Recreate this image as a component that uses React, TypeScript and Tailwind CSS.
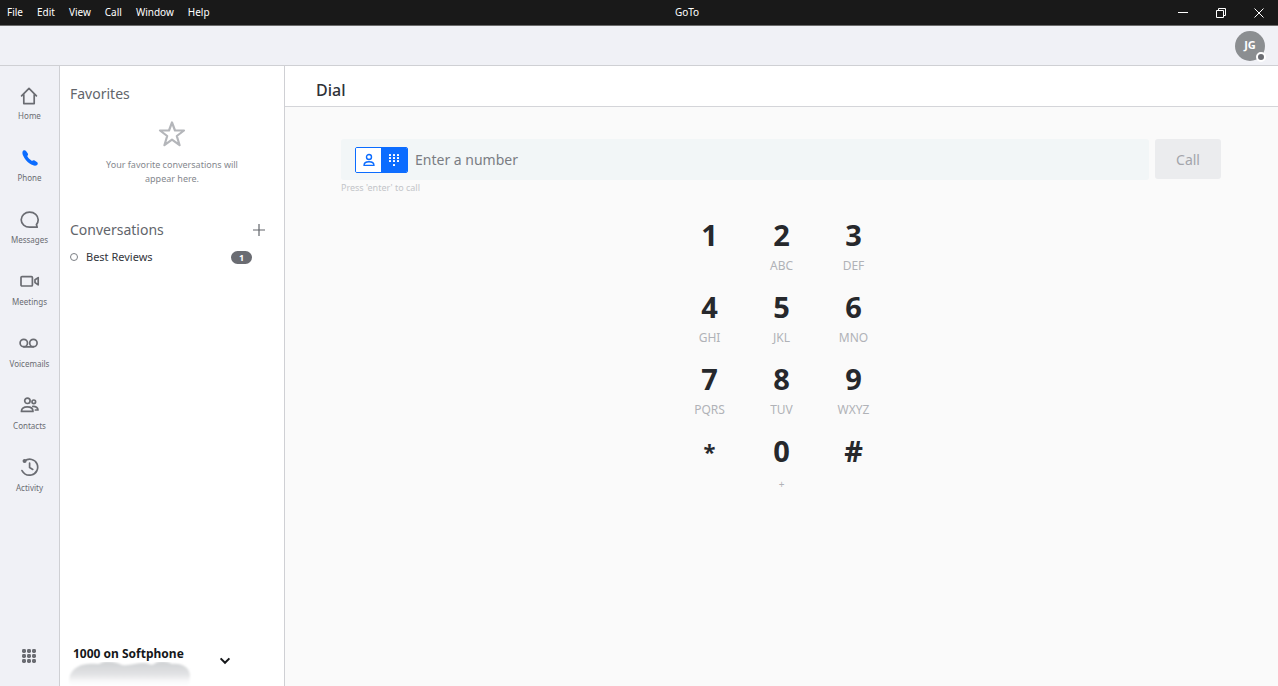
import type { ReactNode } from "react";

const menus = ["File", "Edit", "View", "Call", "Window", "Help"];

const keys = [
    { digit: "1", letters: "" },
    { digit: "2", letters: "ABC" },
    { digit: "3", letters: "DEF" },
    { digit: "4", letters: "GHI" },
    { digit: "5", letters: "JKL" },
    { digit: "6", letters: "MNO" },
    { digit: "7", letters: "PQRS" },
    { digit: "8", letters: "TUV" },
    { digit: "9", letters: "WXYZ" },
    { digit: "*", letters: "" },
    { digit: "0", letters: "+" },
    { digit: "#", letters: "" },
];

function Icon({ children }: { children: ReactNode }) {
    return (
        <svg width="20" height="20" viewBox="0 0 20 20" fill="none" stroke="currentColor" strokeWidth="1.7" strokeLinecap="round" strokeLinejoin="round" aria-hidden="true">
            {children}
        </svg>
    );
}

const navItems = [
    {
        label: "Home",
        icon: <path d="M2.6 9.8 10 2.4 17.4 9.8M4.8 8.8V17.6H15.2V8.8" />,
    },
    {
        label: "Phone",
        active: true,
        icon: (
            <path
                d="M2.6 3.4C3.2 2.2 5 1.8 6 3L7.8 5.6C8.3 6.5 8 7.3 7.2 8.1C8.2 10 9.8 11.8 12 12.9C12.8 12.1 13.7 11.9 14.6 12.4L17.2 14.2C18.3 15.1 17.7 16.6 16.8 17.2C15.2 18.2 12.4 17.4 10 15.8C7.2 14 4.4 10.8 3.2 7.8C2.5 6.2 2.2 4.6 2.6 3.4Z"
                fill="currentColor"
                stroke="none"
            />
        ),
    },
    {
        label: "Messages",
        icon: <path d="M17.2 17.2H9.6C5 17.2 1.2 14.2 1.2 9.8C1.2 5.4 5 2.2 9.6 2.2C14.4 2.2 18.2 5.2 18.2 9.8C18.2 11.8 17.6 13.2 16.4 14.6Z" />,
    },
    {
        label: "Meetings",
        icon: (
            <>
                <rect x="1" y="4.6" width="11.4" height="9.4" rx="1" />
                <path d="M18.2 5.6V12.8L15 10.6V7.8Z" />
            </>
        ),
    },
    {
        label: "Voicemails",
        icon: (
            <>
                <circle cx="4.8" cy="9" r="3.7" />
                <circle cx="14.4" cy="9" r="3.7" />
                <path d="M4.8 12.8H14.4" />
            </>
        ),
    },
    {
        label: "Contacts",
        icon: (
            <>
                <circle cx="7.4" cy="4.8" r="2.7" />
                <circle cx="13.8" cy="5.8" r="1.8" />
                <path d="M1.4 15.4C1.4 12.2 4 10.8 7.2 10.8C10.4 10.8 13 12.2 13 15.4ZM12.8 10.4C15.8 10.2 18 11.6 18 14H15.4" />
            </>
        ),
    },
    {
        label: "Activity",
        icon: (
            <>
                <path d="M4.6 2.9C9 -.2 15 1.2 17 5.8C19 10.6 16.4 15.8 11.4 17C7.4 17.8 3.8 15.8 2 12.6" />
                <circle cx="4.6" cy="3" r="1.2" fill="currentColor" />
                <path d="M9.6 5.2V9.6L12.8 11.4" />
            </>
        ),
    },
];

function TitleBar() {
    return (
        <header className="grid h-[26px] shrink-0 grid-cols-[1fr_auto_1fr] items-center border-b border-[#6b6b6b] bg-[#191919] text-[10px] text-white">
            <nav className="flex gap-[14px] pl-[7px]">
                {menus.map((menu) => (
                    <button key={menu} type="button">{menu}</button>
                ))}
            </nav>
            <span className="pl-[96px]">GoTo</span>
            <div className="flex justify-end">
                <button type="button" aria-label="Minimize" className="flex w-[38px] justify-center">
                    <svg width="10" height="10" viewBox="0 0 10 10" stroke="currentColor"><path d="M0 4.5H10" /></svg>
                </button>
                <button type="button" aria-label="Restore" className="flex w-[38px] justify-center">
                    <svg width="10" height="10" viewBox="0 0 10 10" fill="none" stroke="currentColor"><path d="M.5 2.5H7.5V9.5H.5ZM2.5 2.5V.5H9.5V7.5H7.5" /></svg>
                </button>
                <button type="button" aria-label="Close" className="flex w-[38px] justify-center">
                    <svg width="10" height="10" viewBox="0 0 10 10" stroke="currentColor"><path d="M.5 .5 9.5 9.5M9.5 .5 .5 9.5" /></svg>
                </button>
            </div>
        </header>
    );
}

function NavRail() {
    return (
        <nav className="flex w-[60px] shrink-0 flex-col items-center border-r border-[#cfd0d4] bg-[#f0f1f6] pt-5 pb-5 text-[#6a6c72]">
            {navItems.map((item) => (
                <a key={item.label} href="#" className="flex h-[62px] flex-col items-center gap-1">
                    <span className={item.active ? "text-[#0b6cff]" : ""}>
                        <Icon>{item.icon}</Icon>
                    </span>
                    <span className="text-[8px] leading-[12px]">{item.label}</span>
                </a>
            ))}
            <button type="button" aria-label="Apps" className="mt-auto">
                <svg width="20" height="20" viewBox="0 0 20 20" fill="currentColor">
                    {[3, 8, 13].map((y) =>
                        [2, 7, 12].map((x) => <rect key={`${x}-${y}`} x={x} y={y} width="4" height="4" rx="1.4" />)
                    )}
                </svg>
            </button>
        </nav>
    );
}

function Sidebar() {
    return (
        <aside className="flex w-[225px] shrink-0 flex-col border-r border-[#cfd0d4] bg-white">
            <h2 className="pt-[18px] pl-[10px] text-[14px] leading-5 text-[#62656b]">Favorites</h2>
            <div className="mt-4 flex flex-col items-center text-center text-[#85888e]">
                <svg width="28" height="28" viewBox="0 0 28 28" fill="none" stroke="#b4b6ba" strokeWidth="2.2" strokeLinejoin="round" aria-hidden="true">
                    <path d="M14 2.5 17 10.5H26L18.8 16 21.6 25.2 14 19.6 6.4 25.2 9.2 16 2 10.5H11Z" />
                </svg>
                <p className="mt-[10px] w-[150px] text-[9px] leading-[14px]">Your favorite conversations will appear here.</p>
            </div>
            <div className="mt-[34px] flex items-center justify-between pr-[19px] pl-[10px] text-[#62656b]">
                <h2 className="text-[14px] leading-5">Conversations</h2>
                <button type="button" aria-label="New conversation">
                    <svg width="12" height="12" viewBox="0 0 12 12" stroke="currentColor" strokeWidth="1.2"><path d="M0 6H12M6 0V12" /></svg>
                </button>
            </div>
            <a href="#" className="mt-2 flex items-center pr-[32px] pl-[10px] text-[11px] leading-[18px] text-[#33363c]">
                <span className="h-2 w-2 rounded-full border border-[#7c7f85]" />
                <span className="ml-[8px]">Best Reviews</span>
                <span className="ml-auto h-[13px] w-[21px] rounded-full bg-[#6a6c72] text-center text-[9px] leading-[13px] font-bold text-white">1</span>
            </a>
            <div className="mt-auto flex items-start pl-[8px]">
                <div>
                    <p className="pl-[5px] text-[12px] leading-[16px] font-bold text-[#15171a]">1000 on Softphone</p>
                    <svg width="126" height="24" viewBox="0 0 126 24" className="block" aria-hidden="true">
                        <defs>
                            <linearGradient id="smudge" x1="0" y1="0" x2="0" y2="1">
                                <stop offset="0" stopColor="#cfd1d3" />
                                <stop offset=".55" stopColor="#e3e4e6" />
                                <stop offset=".8" stopColor="#f8f8f9" />
                                <stop offset="1" stopColor="#ffffff" />
                            </linearGradient>
                            <filter id="soften"><feGaussianBlur stdDeviation="1" /></filter>
                        </defs>
                        <path d="M2 24C-1 12 6 3 20 2C26 1 30 3 33 1C40 -2 47 0 54 3C62 4 68 1 76 1C80 1 83 4 86 2C92 -2 98 -1 104 2C114 1 121 5 122 13L121 24Z" fill="url(#smudge)" filter="url(#soften)" />
                    </svg>
                </div>
                <button type="button" aria-label="Change device" className="mt-[11px] ml-[25px]">
                    <svg width="12" height="8" viewBox="0 0 12 8" fill="none" stroke="#15171a" strokeWidth="2"><path d="M1.6 1.4 6 5.8 10.4 1.4" /></svg>
                </button>
            </div>
        </aside>
    );
}

function DialForm() {
    return (
        <form className="pt-[32px] pr-[57px] pl-[56px]">
            <div className="flex gap-[6px]">
                <div className="flex h-[41px] grow items-center rounded-[3px] bg-[#f2f6f7] pl-[14px]">
                    <div className="flex h-[26px] w-[53px] shrink-0 overflow-hidden rounded-[2px] border border-[#0b6cff]">
                        <button type="button" aria-label="Contacts" className="flex w-[25px] items-center justify-center bg-white text-[#0b6cff]">
                            <svg width="14" height="14" viewBox="0 0 14 14" fill="none" stroke="currentColor" strokeWidth="1.4" strokeLinejoin="round">
                                <circle cx="7" cy="4" r="2.5" />
                                <path d="M2 12.4C2 9.8 4.4 8.8 7 8.8C9.6 8.8 12 9.8 12 12.4Z" />
                            </svg>
                        </button>
                        <button type="button" aria-label="Dial pad" className="flex grow items-center justify-center bg-[#0b6cff] text-white">
                            <svg width="12" height="14" viewBox="0 0 12 14" fill="currentColor">
                                {[1, 4, 7].map((y) =>
                                    [1, 5, 9].map((x) => <rect key={`${x}-${y}`} x={x} y={y} width="2" height="2" rx=".6" />)
                                )}
                                <rect x="5" y="11" width="2" height="2" rx=".6" />
                            </svg>
                        </button>
                    </div>
                    <input
                        type="text"
                        aria-label="Number"
                        placeholder="Enter a number"
                        className="min-w-0 grow bg-transparent px-[7px] text-[14px] outline-none placeholder:text-[#7a7d83]"
                    />
                </div>
                <button type="submit" className="h-10 w-[66px] rounded-[3px] bg-[#ebecee] text-[14px] text-[#a3a5ab]">Call</button>
            </div>
            <p className="mt-[2px] text-[9px] leading-[12px] text-[#c3c5c9]">Press 'enter' to call</p>
        </form>
    );
}

function Keypad() {
    return (
        <div className="mt-[21px] grid grid-cols-[72px_72px_72px] justify-center">
            {keys.map((key) => (
                <button key={key.digit} type="button" className="flex h-[72px] flex-col items-center gap-[3px]">
                    <span className={`leading-[40px] font-bold text-[#26282c] ${key.digit === "*" ? "text-[22px]" : "text-[29px]"}`}>{key.digit}</span>
                    <span className={`leading-[16px] text-[#b0b2b7] ${key.letters === "+" ? "pt-[2px] text-[10px]" : "text-[12px]"}`}>{key.letters}</span>
                </button>
            ))}
        </div>
    );
}

export default function App() {
    return (
        <div className="flex min-h-screen flex-col bg-white font-['Noto_Sans','Open_Sans',sans-serif]">
            <TitleBar />
            <div className="flex h-10 shrink-0 items-center justify-end border-b border-[#cfd0d4] bg-[#f0f1f6] pr-[13px]">
                <button type="button" className="relative flex h-[30px] w-[30px] items-center justify-center rounded-full bg-[#8b8e91] text-[11px] font-bold text-white">
                    JG
                    <span className="absolute -right-[1px] -bottom-[1px] h-[10px] w-[10px] rounded-full border-2 border-white bg-[#6a6c72]" />
                </button>
            </div>
            <div className="flex grow">
                <NavRail />
                <Sidebar />
                <main className="min-w-0 grow bg-[#fafafa]">
                    <h1 className="h-[41px] border-b border-[#d4d5d9] bg-white pt-[12px] pl-[31px] text-[16px] leading-6 font-medium text-[#2f3237]">Dial</h1>
                    <DialForm />
                    <Keypad />
                </main>
            </div>
        </div>
    );
}
